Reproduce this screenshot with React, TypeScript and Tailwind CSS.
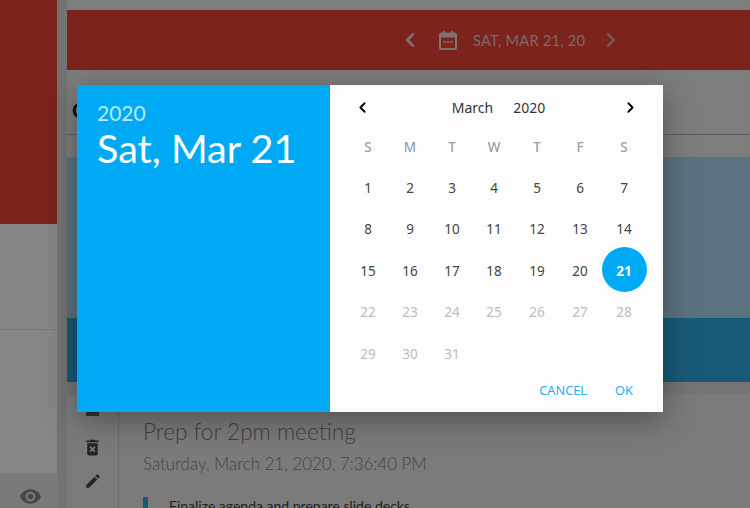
import { ChevronLeft, ChevronRight } from "lucide-react";

const heads = ["S", "M", "T", "W", "T", "F", "S"];
const days = Array.from({ length: 31 }, (_, i) => i + 1);

export default function App() {
  return (
    <div className="relative flex h-[508px] w-[750px] overflow-hidden bg-[#7d7d7d] font-['Lato',sans-serif]">
      {/* sidebar */}
      <aside className="flex w-[57px] shrink-0 flex-col bg-[#858585]">
        <div className="h-[224px] bg-[#7b231c]" />
        <div className="h-[106px] border-b border-[#7a7a7a]" />
        <div className="h-[143px] bg-[#868686]" />
        <div className="flex flex-1 justify-center bg-[#7a7a7a] pl-[4px] pt-[12px]">
          <svg viewBox="0 0 24 24" className="h-[23px] w-[23px]" fill="#484848">
            <path d="M12 4.5C7 4.5 2.73 7.61 1 12c1.73 4.39 6 7.5 11 7.5s9.27-3.11 11-7.5c-1.73-4.39-6-7.5-11-7.5zM12 17c-2.76 0-5-2.24-5-5s2.24-5 5-5 5 2.24 5 5-2.24 5-5 5zm0-8c-1.66 0-3 1.34-3 3s1.34 3 3 3 3-1.34 3-3-1.34-3-3-3z" />
          </svg>
        </div>
      </aside>
      <div className="w-[10px] shrink-0 bg-[#737373]" />
      {/* main */}
      <main className="flex min-w-0 flex-1 flex-col pt-[10px]">
        <header className="flex h-[60px] shrink-0 items-center bg-[#7b231c] pl-[332px]">
          <ChevronLeft className="h-[22px] w-[22px] text-[#7f7272]" strokeWidth={3} />
          <svg viewBox="0 0 18 19" className="ml-[18px] h-[19px] w-[18px] text-[#7f7272]" fill="none" stroke="currentColor">
            <rect x="1" y="2.5" width="16" height="15.5" rx="1.5" strokeWidth="2" />
            <rect x="1" y="3" width="16" height="3.5" fill="currentColor" stroke="none" />
            <rect x="4" y="0" width="2" height="3" fill="currentColor" stroke="none" />
            <rect x="12" y="0" width="2" height="3" fill="currentColor" stroke="none" />
            <rect x="4.5" y="10" width="2" height="2" fill="currentColor" stroke="none" />
            <rect x="8" y="10" width="2" height="2" fill="currentColor" stroke="none" />
            <rect x="11.5" y="10" width="2" height="2" fill="currentColor" stroke="none" />
          </svg>
          <span className="ml-[16px] text-[14.7px] tracking-[0.2px] text-[#7d6a68]">SAT, MAR 21, 20</span>
          <ChevronRight className="ml-[15px] h-[22px] w-[22px] text-[#7c5450]" strokeWidth={3} />
        </header>
        <div className="flex h-[65px] shrink-0 items-center border-b border-[#5c5c5c] pl-[5px] pt-[15px] text-[21px] font-bold text-[#111]">C</div>
        <div className="h-[22px] shrink-0" />
        <section className="flex h-[238px] shrink-0 flex-col bg-[#757575]">
          <div className="h-[161px] bg-[#5b7380]" />
          <div className="h-[64px] bg-[#175a78]" />
        </section>
        <section className="flex min-h-0 flex-1 bg-[#7b7b7b]">
          <div className="flex w-[52px] shrink-0 flex-col items-center border-r border-[#6c6c6c] pt-[6px]">
            <div className="h-[15px] w-[13px] bg-[#333333]" />
            <svg viewBox="0 0 24 24" className="mt-[21px] h-[21px] w-[21px]" fill="#252525">
              <path d="M6 19c0 1.1.9 2 2 2h8c1.1 0 2-.9 2-2V7H6v12zm2.46-7.12l1.41-1.41L12 12.59l2.12-2.12 1.41 1.41L13.41 14l2.12 2.12-1.41 1.41L12 15.41l-2.12 2.12-1.41-1.41L10.59 14l-2.13-2.12zM15.5 4l-1-1h-5l-1 1H5v2h14V4z" />
            </svg>
            <svg viewBox="0 0 24 24" className="mt-[14px] h-[18px] w-[18px]" fill="#252525">
              <path d="M3 17.25V21h3.75L17.81 9.94l-3.75-3.75L3 17.25zM20.71 7.04c.39-.39.39-1.02 0-1.41l-2.34-2.34c-.39-.39-1.02-.39-1.41 0l-1.83 1.83 3.75 3.75 1.83-1.83z" />
            </svg>
          </div>
          <div className="pl-[24px] pt-[23px]">
            <h1 className="whitespace-nowrap text-[22.6px] font-light leading-[28px] text-[#404040]">Prep for 2pm meeting</h1>
            <p className="mt-[8px] whitespace-nowrap text-[16.9px] font-light leading-[20px] text-[#454545]">Saturday, March 21, 2020, 7:36:40 PM</p>
            <div className="mt-[23px] flex items-start">
              <div className="h-[20px] w-[5px] bg-[#175a78]" />
              <span className="ml-[21px] whitespace-nowrap text-[14px] leading-[18px] text-[#222]">Finalize agenda and prepare slide decks</span>
            </div>
          </div>
        </section>
      </main>

      {/* dialog */}
      <div className="absolute left-[77px] top-[85px] flex h-[327px] w-[586px] shadow-[0_8px_30px_rgba(0,0,0,0.35)]">
        <div className="w-[253px] shrink-0 bg-[#00a9f4] pl-[20px] pt-[16px] text-white">
          <div className="text-[21px] leading-[24px] text-[#bfe8fc]">2020</div>
          <div className="text-[39.6px] leading-[45px]">Sat, Mar 21</div>
        </div>
        <div className="flex flex-1 flex-col bg-[#fdfdfe] pl-[17px] pr-[16px] font-['Noto_Sans',sans-serif]">
          <div className="flex h-[44px] shrink-0 items-center justify-between pl-[7px] pr-[8px] pt-[1px]">
            <ChevronLeft className="h-[17px] w-[17px]" strokeWidth={2.6} color="#000" />
            <div className="ml-[4px] flex gap-[20px] text-[14px] text-[#333]">
              <span>March</span>
              <span>2020</span>
            </div>
            <ChevronRight className="h-[17px] w-[17px]" strokeWidth={2.6} color="#000" />
          </div>
          <div className="mt-[-3px] grid grid-cols-[42px_42px_42px_42px_44px_42px_46px] auto-rows-[41.4px] text-[13.5px]">
            {heads.map((h, i) => (
              <div key={i} className="flex items-center justify-center font-medium text-[#9a9fa3]">{h}</div>
            ))}
            {days.map((d) => (
              <div
                key={d}
                className={
                  d === 21
                    ? "flex items-center justify-center"
                    : d < 21
                      ? "flex items-center justify-center text-[#444]"
                      : "flex items-center justify-center text-[#bcbcbc]"
                }
              >
                {d === 21 ? (
                  <span className="mb-[2px] flex h-[45px] w-[45px] shrink-0 items-center justify-center rounded-full bg-[#00a9f4] pt-[2px] font-bold text-white">21</span>
                ) : (
                  d
                )}
              </div>
            ))}
          </div>
          <div className="mt-[6px] flex justify-end gap-[28px] pr-[14px] text-[12.8px] leading-[20px] text-[#1eb0f5]">
            <span>CANCEL</span>
            <span>OK</span>
          </div>
        </div>
      </div>
    </div>
  );
}
